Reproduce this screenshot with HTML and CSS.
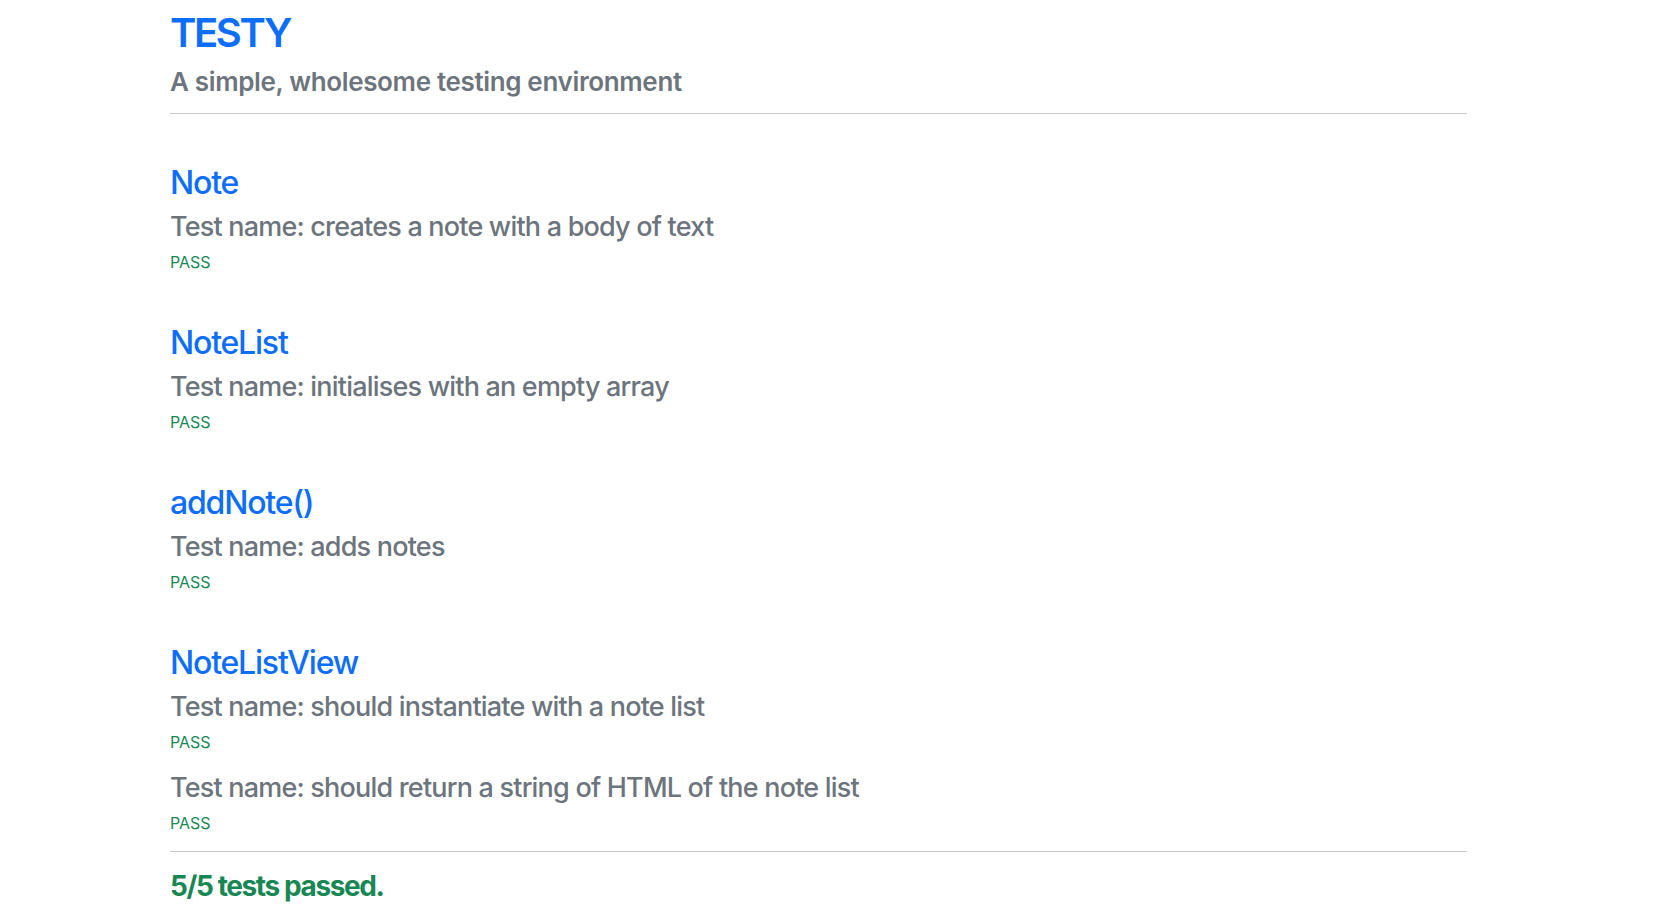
FILE: index.html
```html
<!DOCTYPE html>
<html lang="en">
<head>
<meta charset="utf-8">
<title>Testy</title>
<link rel="stylesheet" href="styles.css">
</head>
<body>
<div class="container">
  <header class="header">
    <h1 class="title">TESTY</h1>
    <h4 class="subtitle">A simple, wholesome testing environment</h4>
  </header>
  <hr class="rule">
  <main class="results">
    <section class="suite">
      <h2 class="suite-name">Note</h2>
      <div class="test">
        <h3 class="test-name">Test name: creates a note with a body of text</h3>
        <p class="status">PASS</p>
      </div>
    </section>
    <section class="suite">
      <h2 class="suite-name">NoteList</h2>
      <div class="test">
        <h3 class="test-name">Test name: initialises with an empty array</h3>
        <p class="status">PASS</p>
      </div>
    </section>
    <section class="suite">
      <h2 class="suite-name">addNote()</h2>
      <div class="test">
        <h3 class="test-name">Test name: adds notes</h3>
        <p class="status">PASS</p>
      </div>
    </section>
    <section class="suite">
      <h2 class="suite-name">NoteListView</h2>
      <div class="test">
        <h3 class="test-name">Test name: should instantiate with a note list</h3>
        <p class="status">PASS</p>
      </div>
      <div class="test">
        <h3 class="test-name">Test name: should return a string of HTML of the note list</h3>
        <p class="status">PASS</p>
      </div>
    </section>
  </main>
  <hr class="rule rule-bottom">
  <h3 class="summary">5/5 tests passed.</h3>
</div>
</body>
</html>
```
FILE: styles.css
```css
html, body {
  margin: 0;
  padding: 0;
  background: #ffffff;
}

body {
  font-family: Inter, "Noto Sans", "Liberation Sans", sans-serif;
  color: #212529;
}

.container {
  width: 1297px;
  margin-left: 170px;
}

.header {
  padding-top: 9px;
}

.title {
  margin: 0 0 9px;
  font-size: 40px;
  line-height: 48px;
  font-weight: 600;
  color: #0d6efd;
  letter-spacing: -2.4px;
}

.subtitle {
  margin: 0;
  font-size: 26px;
  line-height: 31px;
  font-weight: 600;
  color: #6c757d;
  letter-spacing: -0.35px;
}

.rule {
  margin: 16px 0 0;
  border: 0;
  border-top: 1px solid #c8c9ca;
  height: 0;
}

.results {
  display: flex;
  flex-direction: column;
  gap: 50px;
  padding-top: 50px;
}

.suite-name {
  margin: 0 0 8px;
  font-size: 32px;
  line-height: 38px;
  font-weight: 500;
  color: #0d6efd;
  letter-spacing: -1.2px;
}

.test-name {
  margin: 0 0 6px;
  font-size: 27px;
  line-height: 34px;
  font-weight: 500;
  color: #6c757d;
  letter-spacing: -0.8px;
}

.status {
  margin: 0 0 17px;
  font-size: 16px;
  line-height: 24px;
  color: #198754;
  letter-spacing: 0;
}

.test:last-child .status {
  margin-bottom: 0;
}

.rule-bottom {
  margin-top: 16px;
}

.summary {
  margin: 17px 0 0;
  font-size: 28px;
  line-height: 34px;
  font-weight: 700;
  color: #198754;
  letter-spacing: -1.4px;
}
```
